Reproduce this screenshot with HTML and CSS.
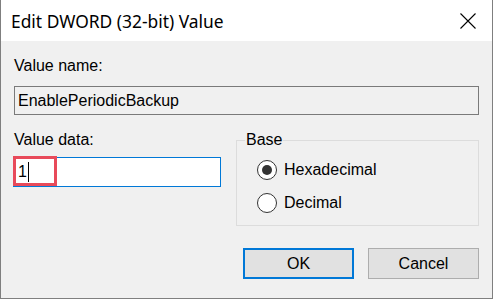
FILE: index.html
```html
<!DOCTYPE html>
<html lang="en">
<head>
    <meta charset="UTF-8">
    <title>Edit DWORD (32-bit) Value</title>
    <link rel="stylesheet" href="styles.css">
</head>
<body>
<div class="window">
    <div class="titlebar">
        <span class="title">Edit DWORD (32-bit) Value</span>
        <svg class="close" width="16" height="16" viewBox="0 0 16 16">
            <path d="M0.5 0.5 L15.5 15.5 M15.5 0.5 L0.5 15.5" stroke="#000" stroke-width="1.1" fill="none"/>
        </svg>
    </div>
    <div class="content">
        <div class="label first">Value name:</div>
        <div class="readonly">EnablePeriodicBackup</div>

        <div class="row">
            <div class="leftcol">
                <div class="label">Value data:</div>
                <div class="datainput">
                    <span class="val">1</span><span class="caret"></span>
                    <!-- 红框标注 -->
                    <span class="mark"></span>
                </div>
            </div>
            <fieldset class="base">
                <legend>Base</legend>
                <div class="radio"><span class="dot checked"></span>Hexadecimal</div>
                <div class="radio"><span class="dot"></span>Decimal</div>
            </fieldset>
        </div>

        <div class="buttons">
            <div class="btn ok">OK</div>
            <div class="btn">Cancel</div>
        </div>
    </div>
</div>
</body>
</html>
```

FILE: styles.css
```css
*{
    margin: 0;
    padding: 0;
    box-sizing: border-box;
}
body{
    background: #fff;
}
.window{
    width: 493px;
    height: 299px;
    border: 1px solid #7f7f7f;
    border-top: 0;
    display: flex;
    flex-direction: column;
    font-family: "Liberation Sans", Arial, sans-serif;
    font-size: 16px;
    color: #000;
}
.titlebar{
    height: 41px;
    background: #fff;
    display: flex;
    align-items: center;
    justify-content: space-between;
    padding: 0 16px 0 10px;
    flex-shrink: 0;
}
.title{
    font-family: "Noto Sans", sans-serif;
    font-size: 17.4px;
}
.content{
    flex: 1;
    background: #f0f0f0;
    padding: 0 13px 0 12px;
}
.label{
    line-height: 18px;
    padding-left: 1px;
}
.label.first{
    margin-top: 16px;
}
.readonly{
    margin-top: 11px;
    height: 29px;
    border: 1px solid #7a7a7a;
    line-height: 27px;
    padding-left: 3px;
    margin-left: 1px;
}
.row{
    display: flex;
    align-items: flex-start;
    margin-top: 16px;
}
.leftcol{
    width: 208px;
}
.datainput{
    position: relative;
    margin-top: 8px;
    height: 30px;
    border: 1px solid #0078d7;
    background: #fff;
    line-height: 28px;
    padding-left: 4px;
    display: flex;
    align-items: center;
}
.caret{
    width: 1px;
    height: 20px;
    background: #000;
    margin-left: 1px;
}
.mark{
    position: absolute;
    left: -1px;
    top: -2px;
    width: 44px;
    height: 30px;
    border: 3px solid #e84a5a;
}
.base{
    flex: 1;
    margin-left: 15px;
    border: 1px solid #dcdcdc;
    padding: 4px 0 6px 0;
}
.base legend{
    margin-left: 8px;
    padding: 0 1px;
    line-height: 18px;
}
.radio{
    height: 33px;
    line-height: 33px;
    display: flex;
    align-items: center;
    padding-left: 20px;
}
.dot{
    width: 20px;
    height: 20px;
    border: 1px solid #333;
    border-radius: 50%;
    background: #fff;
    margin-right: 7px;
    display: flex;
    align-items: center;
    justify-content: center;
}
.dot.checked::after{
    content: "";
    width: 10px;
    height: 10px;
    border-radius: 50%;
    background: #333;
}
.buttons{
    display: flex;
    justify-content: flex-end;
    gap: 14px;
    margin-top: 22px;
}
.btn{
    width: 111px;
    height: 31px;
    border: 1px solid #adadad;
    background: #e1e1e1;
    text-align: center;
    line-height: 29px;
}
.btn.ok{
    border: 2px solid #0078d7;
    line-height: 27px;
}
```
